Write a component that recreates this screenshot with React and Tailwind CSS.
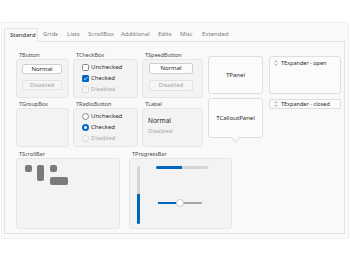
import React from 'react';

const tabs = [
  { name: 'Standard', w: 'w-[34px]', active: true },
  { name: 'Grids', w: 'w-[24px]' },
  { name: 'Lists', w: 'w-[21px]' },
  { name: 'ScrollBox', w: 'w-[33px]' },
  { name: 'Additional', w: 'w-[37px]' },
  { name: 'Edits', w: 'w-[22px]' },
  { name: 'Misc', w: 'w-[22px]' },
  { name: 'Extended', w: 'w-[38px]' },
];

const Group = ({ label, className, children }) => (
  <div className="flex flex-col">
    <div className="h-[7px] pl-[3px] text-[5.5px] leading-[7px] text-[#4a4a4a]">{label}</div>
    <div className={`bg-[#f3f3f3] border border-[#e6e6e6] rounded-[3px] ${className}`}>{children}</div>
  </div>
);

const Btn = ({ children, disabled, className }) => (
  <div
    className={`flex items-center justify-center rounded-[2px] border text-[6px] ${
      disabled ? 'border-[#e2e2e2] bg-[#f6f6f6] text-[#a3a3a3]' : 'border-[#cfcfcf] bg-[#fdfdfd] text-[#2a2a2a]'
    } ${className}`}
  >
    {children}
  </div>
);

const Check = ({ state, label }) => (
  <div className="flex h-[11px] items-center gap-[2px]">
    {state === 'checked' ? (
      <div className="flex h-[7px] w-[7px] items-center justify-center rounded-[1.5px] bg-[#0067c0]">
        <svg width="5" height="5" viewBox="0 0 10 10">
          <path d="M1.5 5.2 L4 7.6 L8.6 2.4" fill="none" stroke="#fff" strokeWidth="1.6" />
        </svg>
      </div>
    ) : (
      <div
        className={`h-[7px] w-[7px] rounded-[1.5px] border ${
          state === 'disabled' ? 'border-[#dadada] bg-[#f6f6f6]' : 'border-[#8a8a8a] bg-[#fbfbfb]'
        }`}
      />
    )}
    <span className={`text-[6px] ${state === 'disabled' ? 'text-[#a8a8a8]' : 'text-[#2a2a2a]'}`}>{label}</span>
  </div>
);

const Radio = ({ state, label }) => (
  <div className="flex h-[11px] items-center gap-[2px]">
    {state === 'checked' ? (
      <div className="flex h-[7px] w-[7px] items-center justify-center rounded-full bg-[#0067c0]">
        <div className="h-[3px] w-[3px] rounded-full bg-white" />
      </div>
    ) : (
      <div
        className={`h-[7px] w-[7px] rounded-full border ${
          state === 'disabled' ? 'border-[#d8d8d8] bg-[#f6f6f6]' : 'border-[#8a8a8a] bg-[#fbfbfb]'
        }`}
      />
    )}
    <span className={`text-[6px] ${state === 'disabled' ? 'text-[#a8a8a8]' : 'text-[#2a2a2a]'}`}>{label}</span>
  </div>
);

const Chevrons = () => (
  <svg width="4" height="6" viewBox="0 0 4 6" className="shrink-0">
    <path d="M0.6 2 L2 0.7 L3.4 2" fill="none" stroke="#666" strokeWidth="0.6" />
    <path d="M0.6 4 L2 5.3 L3.4 4" fill="none" stroke="#666" strokeWidth="0.6" />
  </svg>
);

export default function App() {
  return (
    <div className="h-[265px] w-[350px] overflow-hidden bg-white pt-[22px] pl-[1px] font-['Noto_Sans',sans-serif]">
      <div className="h-[217px] w-[348px] border border-[#f0f0f0] bg-[#fafafa] pt-[5px] pl-[2px]">
        {/* tab strip */}
        <div className="relative z-10 flex h-[13px] items-end">
          {tabs.map((t) =>
            t.active ? (
              <div
                key={t.name}
                className={`${t.w} -mb-[1px] h-[14px] rounded-t-[2px] border border-b-0 border-[#e3e3e3] bg-[#f9f9f9] pl-[5px] text-[6px] leading-[12px] text-[#2a2a2a]`}
              >
                {t.name}
              </div>
            ) : (
              <div key={t.name} className={`${t.w} h-[13px] pl-[5px] text-[6px] leading-[13px] text-[#7a7a7a]`}>
                {t.name}
              </div>
            )
          )}
        </div>

        {/* page */}
        <div className="h-[193px] w-[341px] border border-[#e3e3e3] bg-[#f9f9f9] pt-[10px] pl-[11px]">
          <div className="flex">
            <div className="grid grid-cols-[53px_65px_61px] gap-x-[4px] gap-y-[3px]">
              <Group label="TButton" className="h-[39px] pt-[4px] pl-[5px]">
                <Btn className="h-[10px] w-[40px]">Normal</Btn>
                <Btn disabled className="mt-[6px] h-[10px] w-[40px]">Disabled</Btn>
              </Group>
              <Group label="TCheckBox" className="h-[39px] pt-[2px] pl-[8px]">
                <Check state="unchecked" label="Unchecked" />
                <Check state="checked" label="Checked" />
                <Check state="disabled" label="Disabled" />
              </Group>
              <Group label="TSpeedButton" className="h-[39px] pt-[3px] pl-[6px]">
                <Btn className="h-[11px] w-[44px]">Normal</Btn>
                <Btn disabled className="mt-[6px] h-[11px] w-[44px]">Disabled</Btn>
              </Group>

              <Group label="TGroupBox" className="h-[39px]" />
              <Group label="TRadioButton" className="h-[39px] pt-[2px] pl-[8px]">
                <Radio state="unchecked" label="Unchecked" />
                <Radio state="checked" label="Checked" />
                <Radio state="disabled" label="Disabled" />
              </Group>
              <Group label="TLabel" className="h-[39px] pt-[6px] pl-[5px]">
                <div className="h-[11px] text-[6.5px] leading-[11px] text-[#2a2a2a]">Normal</div>
                <div className="h-[11px] text-[6px] leading-[11px] text-[#a8a8a8]">Disabled</div>
              </Group>
            </div>

            <div className="ml-[5px] mt-[4px] flex gap-[6px]">
              <div className="flex w-[55px] flex-col gap-[4px]">
                <div className="flex h-[38px] items-center justify-center rounded-[3px] border border-[#dedede] bg-[#fbfbfb] text-[6px] text-[#2a2a2a]">
                  TPanel
                </div>
                <div className="relative flex h-[40px] items-center justify-center rounded-[3px] border border-[#dedede] bg-[#fbfbfb] text-[6px] text-[#2a2a2a]">
                  TCalloutPanel
                  <div className="absolute -bottom-[4px] left-[23px] h-[7px] w-[7px] rotate-45 border-r border-b border-[#dedede] bg-[#fbfbfb]" />
                </div>
              </div>
              <div className="flex w-[72px] flex-col gap-[5px]">
                <div className="h-[38px] rounded-[3px] border border-[#dedede] bg-[#fbfbfb] pl-[4px] pt-[2px]">
                  <div className="flex h-[8px] items-center gap-[3px] text-[5.5px] text-[#2a2a2a]">
                    <Chevrons />
                    TExpander - open
                  </div>
                </div>
                <div className="flex h-[10px] items-center gap-[3px] rounded-[2px] border border-[#dedede] bg-[#fbfbfb] pl-[4px] text-[5.5px] text-[#2a2a2a]">
                  <Chevrons />
                  TExpander - closed
                </div>
              </div>
            </div>
          </div>

          <div className="mt-[4px] flex gap-[9px]">
            <div className="w-[104px]">
              <Group label="TScrollBar" className="flex h-[71px] items-start gap-[5px] pl-[8px] pt-[6px]">
                <div className="h-[7px] w-[7px] rounded-[2px] bg-[#7a7a7a]" />
                <div className="h-[16px] w-[7px] rounded-[2px] bg-[#7a7a7a]" />
                <div className="ml-[1px] flex flex-col gap-[5px]">
                  <div className="h-[7px] w-[7px] rounded-[2px] bg-[#7a7a7a]" />
                  <div className="h-[8px] w-[18px] rounded-[2px] bg-[#7a7a7a]" />
                </div>
              </Group>
            </div>
            <div className="w-[103px]">
              <Group label="TProgressBar" className="flex h-[71px] items-start pl-[7px] pt-[7px]">
                <div className="flex h-[58px] w-[3px] flex-col overflow-hidden rounded-full bg-[#d4d4d4]">
                  <div className="h-[28px]" />
                  <div className="h-[30px] bg-[#0067c0]" />
                </div>
                <div className="ml-[16px] flex flex-col">
                  <div className="flex h-[3px] w-[52px] overflow-hidden rounded-full bg-[#d4d4d4]">
                    <div className="w-[26px] bg-[#0067c0]" />
                  </div>
                  <div className="relative ml-[2px] mt-[30px] flex h-[8px] w-[44px] items-center">
                    <div className="h-[2px] w-[22px] bg-[#0067c0]" />
                    <div className="h-[2px] w-[22px] bg-[#a8a8a8]" />
                    <div className="absolute left-[18px] top-0 h-[8px] w-[8px] rounded-full border border-[#c8c8c8] bg-white" />
                  </div>
                </div>
              </Group>
            </div>
          </div>
        </div>
      </div>
    </div>
  );
}
